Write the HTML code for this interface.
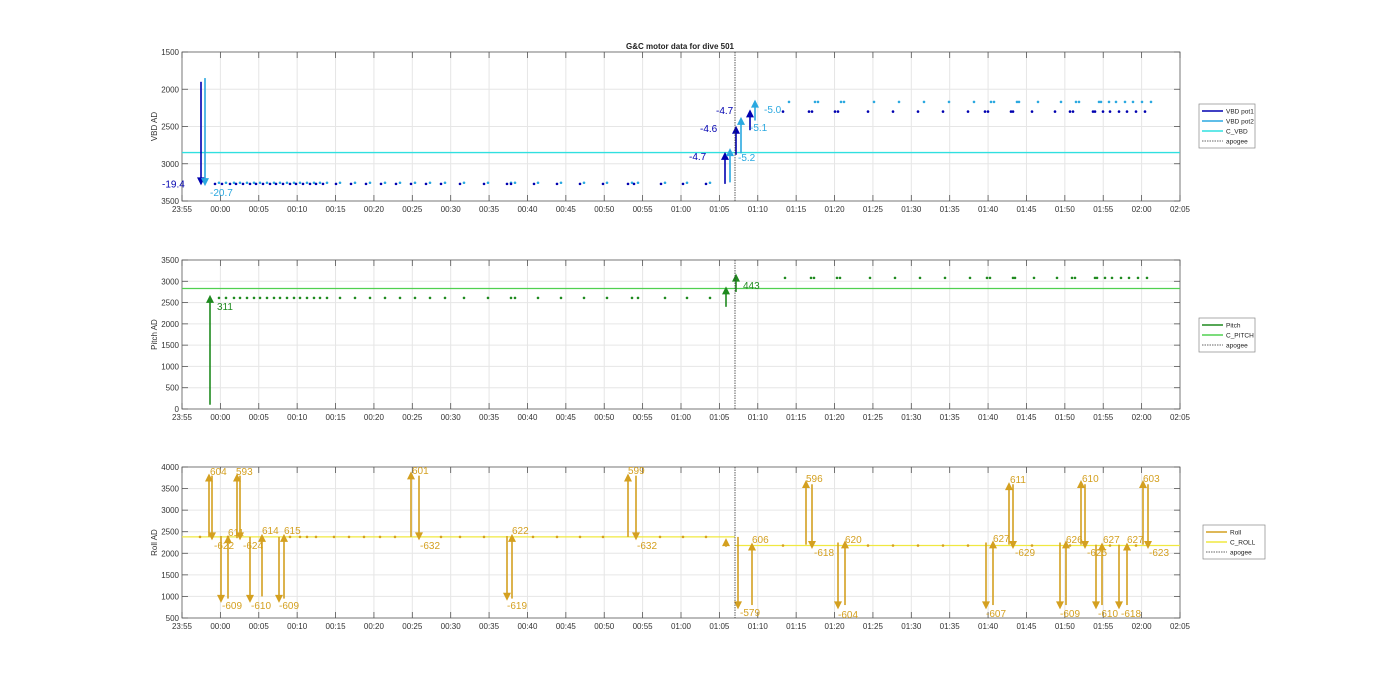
<!DOCTYPE html>
<html><head><meta charset="utf-8"><style>
html,body{margin:0;padding:0;background:#fff;width:1400px;height:693px;overflow:hidden}
svg{display:block;font-family:"Liberation Sans",sans-serif}
</style></head><body>
<svg id="s" width="1400" height="693" xmlns="http://www.w3.org/2000/svg">
<rect width="1400" height="693" fill="#fff"/>
<text x="680" y="49" font-size="8" font-weight="bold" text-anchor="middle" fill="#222">G&amp;C motor data for dive 501</text>
</svg>
<script>
var S=document.getElementById('s'),NS='http://www.w3.org/2000/svg';
function el(t,a,txt){var e=document.createElementNS(NS,t);for(var k in a)e.setAttribute(k,a[k]);if(txt!=null)e.textContent=txt;S.appendChild(e);return e;}
var X0=182,X1=1180;
function xt(i){return X0+i*(X1-X0)/26;}
var labs=['23:55'];for(var m=0;m<=125;m+=5){var h=Math.floor(m/60),mm=m%60;labs.push((h<10?'0':'')+h+':'+(mm<10?'0':'')+mm);}
labs=labs.slice(0,27);
function axes(top,bot,yticks,ylab){
  // grid
  for(var i=1;i<26;i++)el('line',{x1:xt(i),x2:xt(i),y1:top,y2:bot,stroke:'#e6e6e6','stroke-width':1});
  for(var j=1;j<yticks.length-1;j++)el('line',{x1:X0,x2:X1,y1:yticks[j][0],y2:yticks[j][0],stroke:'#e6e6e6','stroke-width':1});
  el('rect',{x:X0,y:top,width:X1-X0,height:bot-top,fill:'none',stroke:'#555','stroke-width':0.8});
  for(var i=0;i<=26;i++){el('line',{x1:xt(i),x2:xt(i),y1:bot,y2:bot-6,stroke:'#555','stroke-width':0.8});el('line',{x1:xt(i),x2:xt(i),y1:top,y2:top+6,stroke:'#555','stroke-width':0.8});
    el('text',{x:xt(i),y:bot+11,'font-size':8,'text-anchor':'middle',fill:'#333'},labs[i]);}
  for(var j=0;j<yticks.length;j++){var y=yticks[j][0];el('line',{x1:X0,x2:X0+6,y1:y,y2:y,stroke:'#555','stroke-width':0.8});el('line',{x1:X1,x2:X1-6,y1:y,y2:y,stroke:'#555','stroke-width':0.8});
    el('text',{x:X0-3,y:y+3,'font-size':8,'text-anchor':'end',fill:'#333'},yticks[j][1]);}
  var yc=(top+bot)/2;el('text',{x:157,y:yc,'font-size':8,'text-anchor':'middle',fill:'#333',transform:'rotate(-90 157 '+yc+')'},ylab);
}
function arrow(x,y1,y2,c){var up=y2<y1;var d=up?1:-1;
  el('line',{x1:x,x2:x,y1:y1,y2:y2+d*7,stroke:c,'stroke-width':1.6});
  el('polygon',{points:(x-4)+','+(y2+d*8)+' '+(x+4)+','+(y2+d*8)+' '+x+','+y2,fill:c});}
function txt(x,y,s,c){el('text',{x:x,y:y,'font-size':10,fill:c},s);}
function dot(x,y,c){el('circle',{cx:x,cy:y,r:1.3,fill:c});}
function legend(x,y,w,items){var h=items.length*10+4;el('rect',{x:x,y:y,width:w,height:h,fill:'#fff',stroke:'#888','stroke-width':0.7});
  items.forEach(function(it,i){var yy=y+7+i*10;el('line',{x1:x+3,x2:x+24,y1:yy,y2:yy,stroke:it[1],'stroke-width':it[2]?0.8:1.6,'stroke-dasharray':it[2]?'1.5,1':''});
  el('text',{x:x+27,y:yy+2.5,'font-size':6.5,fill:'#222'},it[0]);});}
// ---- plot 1
var D1='#0000b0',L1='#2aa8e0',CY='#30e0e0';
function y1(v){return 52+(v-1500)/2000*149;}
axes(52,201,[[y1(1500),'1500'],[y1(2000),'2000'],[y1(2500),'2500'],[y1(3000),'3000'],[y1(3500),'3500']],'VBD AD');
el('line',{x1:X0,x2:X1,y1:y1(2850),y2:y1(2850),stroke:CY,'stroke-width':1.3});
var pre=[215,222,230,236,243,250,256,263,270,276,283,290,296,303,310,316,323,336,351,366,381,396,411,426,441,460,484,507,511,534,557,580,603,628,634,661,683,706];
pre.forEach(function(x){dot(x,y1(3270),D1);dot(x+4,y1(3255),L1);});
var post=[783,809,812,835,838,868,893,918,943,968,985,988,1011,1013,1032,1055,1070,1073,1093,1095,1103,1110,1119,1127,1136,1145];
post.forEach(function(x){dot(x,y1(2300),D1);});
post.forEach(function(x){dot(x+6,y1(2170),L1);});
arrow(201,y1(1900),y1(3290),D1);arrow(205,y1(1850),y1(3300),L1);
arrow(725,y1(3270),y1(2840),D1);arrow(730,y1(3250),y1(2790),L1);
arrow(736,y1(2880),y1(2490),D1);arrow(741,y1(2860),y1(2370),L1);
arrow(750,y1(2550),y1(2270),D1);arrow(755,y1(2420),y1(2140),L1);
txt(162,y1(3280)+3,'-19.4',D1);txt(210,196,'-20.7',L1);
txt(689,160,'-4.7',D1);txt(700,132,'-4.6',D1);txt(716,114,'-4.7',D1);
txt(738,161,'-5.2',L1);txt(750,131,'-5.1',L1);txt(764,113,'-5.0',L1);
el('line',{x1:735,x2:735,y1:52,y2:201,stroke:'#333','stroke-width':0.8,'stroke-dasharray':'1.5,1'});
legend(1199,104,56,[['VBD pot1',D1],['VBD pot2',L1],['C_VBD',CY],['apogee','#333',1]]);
// ---- plot 2
var G='#1f8a1f',LG='#50d050';
function y2(v){return 409-v*149/3500;}
var t2=[];for(var v=0;v<=3500;v+=500)t2.push([y2(v),''+v]);t2.reverse();
axes(260,409,t2,'Pitch AD');
el('line',{x1:X0,x2:X1,y1:y2(2830),y2:y2(2830),stroke:LG,'stroke-width':1.3});
pre.forEach(function(x){dot(x+4,y2(2610),G);});
post.forEach(function(x){dot(x+2,y2(3080),G);});
arrow(210,y2(100),y2(2680),G);arrow(726,y2(2400),y2(2880),G);arrow(736,y2(2750),y2(3180),G);
txt(217,310,'311',G);txt(743,289,'443',G);
el('line',{x1:735,x2:735,y1:260,y2:409,stroke:'#333','stroke-width':0.8,'stroke-dasharray':'1.5,1'});
legend(1199,318,56,[['Pitch',G],['C_PITCH',LG],['apogee','#333',1]]);
// ---- plot 3
var O='#d4a020',Y='#f0e840';
function y3(v){return 618-(v-500)*151/3500;}
var t3=[];for(var v=500;v<=4000;v+=500)t3.push([y3(v),''+v]);t3.reverse();
axes(467,618,t3,'Roll AD');
el('line',{x1:X0,x2:735,y1:y3(2380),y2:y3(2380),stroke:Y,'stroke-width':1.3});
el('line',{x1:735,x2:X1,y1:y3(2180),y2:y3(2180),stroke:Y,'stroke-width':1.3});
[200,228,262,290,300,307,316,334,349,364,380,395,441,460,484,533,557,580,603,660,683,706].forEach(function(x){dot(x,y3(2380),O);});
[783,868,893,918,943,968,1032,1070,1110,1136].forEach(function(x){dot(x,y3(2180),O);});
var R=[[209,2380,3850,'604',210,475],[212,3800,2300,'-622',214,549],[221,2400,850,'-609',222,609],[228,950,2420,'611',228,536],
[237,2350,3850,'593',236,475],[240,3800,2300,'-624',243,549],[250,2380,850,'-610',251,609],[262,1000,2450,'614',262,534],
[279,2380,850,'-609',279,609],[284,950,2450,'615',284,534],[411,2380,3900,'601',412,474],[419,3800,2300,'-632',420,549],
[507,2400,900,'-619',507,609],[512,950,2450,'622',512,534],[628,2380,3850,'599',628,474],[636,3800,2300,'-632',637,549],
[726,2150,2350,'',0,0],[738,2380,700,'-579',740,616],[752,800,2250,'606',752,543],[806,2200,3700,'596',806,482],
[812,3600,2100,'-618',814,556],[838,2250,700,'-604',838,618],[845,800,2300,'620',845,543],[986,2250,700,'-607',986,617],
[993,800,2300,'627',993,542],[1009,2200,3650,'611',1010,483],[1013,3600,2100,'-629',1015,556],[1060,2250,700,'-609',1060,617],
[1066,800,2300,'626',1066,543],[1081,2200,3700,'610',1082,482],[1085,3600,2100,'-625',1087,556],[1096,2200,700,'-610',1098,617],
[1102,800,2250,'627',1103,543],[1119,2200,700,'-618',1121,617],[1127,800,2250,'627',1127,543],[1143,2200,3700,'603',1143,482],
[1148,3600,2100,'-623',1149,556]];
R.forEach(function(r){arrow(r[0],y3(r[1]),y3(r[2]),O);if(r[3])txt(r[4],r[5],r[3],O);});
el('line',{x1:735,x2:735,y1:467,y2:618,stroke:'#333','stroke-width':0.8,'stroke-dasharray':'1.5,1'});
legend(1203,525,62,[['Roll',O],['C_ROLL',Y],['apogee','#333',1]]);
</script>
</body></html>
